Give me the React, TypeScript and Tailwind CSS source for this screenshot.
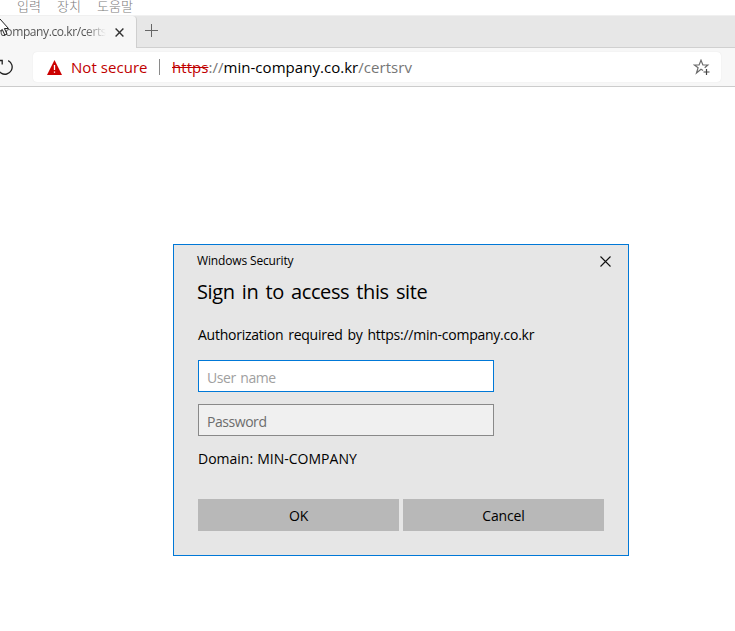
import type { ReactNode } from "react";

const latin = "font-['Open_Sans','Noto_Sans',sans-serif]";

function MenuBar() {
  return (
    <div className="flex h-[15px] shrink-0 items-start bg-white pl-[17px] font-['Noto_Sans_CJK_KR',sans-serif] text-[13px] font-light leading-[12px] text-[#7c7c7c]">
      <span className="w-10">입력</span>
      <span className="w-10">장치</span>
      <span>도움말</span>
    </div>
  );
}

function TabStrip() {
  return (
    <div className="flex h-[33px] shrink-0 border-t border-[#f0f0f0] bg-[#e7e7e7]">
      <div className="relative flex h-8 w-[137px] items-center rounded-tr-[4px] border-r border-[#cfcfcf] bg-[#f7f7f7]">
        <div className="w-[106px] overflow-hidden bg-gradient-to-r from-[#505050] from-80% to-[#f7f7f7] bg-clip-text pl-[3px] text-[12px] leading-[18px] tracking-[-0.4px] whitespace-nowrap text-transparent">
          <span className="-ml-[3px]">company.co.kr/certsrv</span>
        </div>
        <svg className="absolute left-[115px] top-[12px]" width="9" height="9" viewBox="0 0 9 9" fill="none" stroke="#333" strokeWidth="1.4">
          <path d="M.6.6l7.8 7.8M8.4.6L.6 8.4" />
        </svg>
        <svg className="absolute left-0 top-[1px]" width="10" height="21" viewBox="0 0 10 21">
          <path d="M-1 2L0 2L8.5 11.5H4.4L7 17L4.8 18L2.3 12.5L-1 15Z" fill="#fff" stroke="#222" />
        </svg>
      </div>
      <div className="flex h-8 flex-1 border-b border-[#d0d0d0] pl-2 pt-2">
        <svg width="13" height="13" viewBox="0 0 13 13" stroke="#666">
          <path d="M6.5 0v13M0 6.5h13" />
        </svg>
      </div>
    </div>
  );
}

function AddressBar() {
  return (
    <div className="flex h-[39px] shrink-0 border-b border-[#cccccc] bg-[#f7f7f7] pt-1">
      <svg className="mt-[7px] w-[33px] shrink-0" width="33" height="18" viewBox="0 0 33 18" fill="none" stroke="#222" strokeWidth="1.3">
        <path d="M8.2 1.6A7.2 7.2 0 1 1-1 4M-2 1.5H2.2V5.5" />
      </svg>
      <div className="flex h-[30px] w-[688px] items-center rounded-[4px] bg-white pl-[14px] pr-[11px] text-[15px] leading-[30px] shadow-[0_0_1px_#ddd]">
        <svg className="shrink-0" width="15" height="15" viewBox="0 0 15 15">
          <path d="M7.5 0L15 15H0Z" fill="#c00" />
          <path d="M7.5 5v5M7.5 11.5v1.3" stroke="#fff" strokeWidth="1.3" />
        </svg>
        <span className="ml-[9px] w-[88px] whitespace-nowrap tracking-[0.05px] text-[#c00000]">Not secure</span>
        <span className="h-4 w-px bg-[#8a8a8a]" />
        <span className="ml-[12px] flex-1 whitespace-nowrap tracking-[0.04px] text-[#767676]">
          <span className="text-[#c00000] line-through">https</span>://<span className="text-black">min-company.co.kr</span>/certsrv
        </span>
        <svg width="17" height="17" viewBox="0 0 17 17" fill="none" stroke="#6c6c6c" strokeWidth="1.2">
          <path d="M10.1 11.4L8 10.2L3.5 14L5.1 8.7L1.4 6H6.1L8 1.2L9.9 6H14.8L11.7 8.7" />
          <path d="M13.5 10v6M10.5 13h6" stroke="#444" />
        </svg>
      </div>
    </div>
  );
}

function DialogButton({ children }: { children: ReactNode }) {
  return (
    <button className="h-8 w-[201px] bg-[#b8b8b8] pt-[2px] text-[14px] leading-[30px] tracking-[-0.15px]">{children}</button>
  );
}

function SecurityDialog() {
  return (
    <div className="ml-[173px] mt-[157px] flex h-[312px] w-[456px] flex-col border border-[#0078d7] bg-[#e6e6e6] px-[24px] text-black">
      <div className="-ml-px flex h-[32px] items-center justify-between">
        <span className="text-[12px] tracking-[-0.15px]">Windows Security</span>
        <svg className="-mr-[7px]" width="11" height="11" viewBox="0 0 11 11" fill="none" stroke="#111" strokeWidth="1.1">
          <path d="M.5.5l10 10M10.5.5l-10 10" />
        </svg>
      </div>
      <h1 className="-ml-px h-[46px] whitespace-nowrap text-[20px] leading-[30px] tracking-[-0.4px] [word-spacing:2.4px]">Sign in to access this site</h1>
      <p className="h-[37px] whitespace-nowrap text-[14px] leading-[24px] tracking-[-0.25px] [word-spacing:1.5px]">Authorization required by https://min-company.co.kr</p>
      <input className="h-8 w-[296px] shrink-0 border border-[#0078d7] bg-white px-2 pt-[3px] text-[14px] tracking-[-0.45px] [word-spacing:1.5px] outline-none placeholder:text-[#a0a0a0]" placeholder="User name" />
      <input type="password" className="mt-3 h-8 w-[296px] shrink-0 border border-[#898989] bg-[#f0f0f0] px-2 pt-[3px] text-[14px] tracking-[-0.45px] outline-none placeholder:text-[#6d6d6d]" placeholder="Password" />
      <p className="mt-[11px] h-[52px] text-[14px] leading-[24px] [word-spacing:0.5px]">Domain: MIN-COMPANY</p>
      <div className="flex gap-1">
        <DialogButton>OK</DialogButton>
        <DialogButton>Cancel</DialogButton>
      </div>
    </div>
  );
}

export default function App() {
  return (
    <main className={`flex h-[631px] w-[735px] flex-col overflow-hidden bg-white ${latin}`}>
      <MenuBar />
      <TabStrip />
      <AddressBar />
      <SecurityDialog />
    </main>
  );
}
